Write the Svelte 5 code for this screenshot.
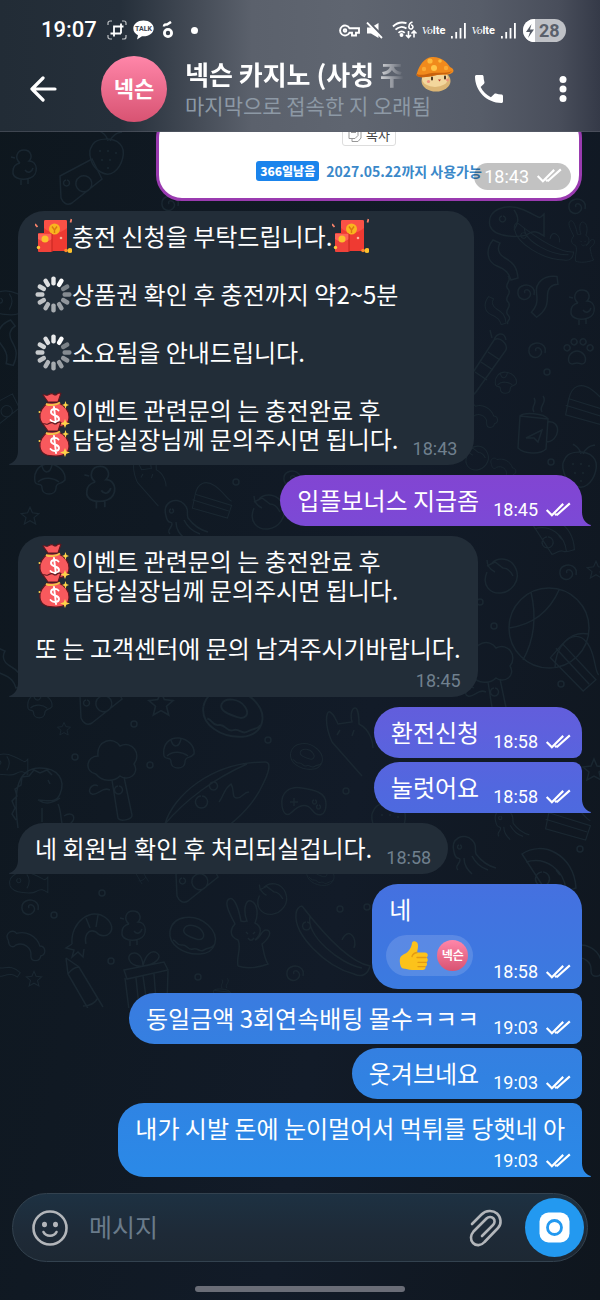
<script lang="ts">
    type Emoji = "envelope" | "spinner" | "bag";

    interface Line {
        text: string;
        before?: Emoji;
        after?: Emoji;
    }

    interface Message {
        out: boolean;
        lines: Line[];
        time: string;
        first?: boolean;
        last?: boolean;
        wrapTime?: boolean;
        reaction?: boolean;
    }

    interface Doodle {
        kind: string;
        x: number;
        y: number;
        s?: number;
        r?: number;
    }

    const contact = "넥슨";
    let draft = $state("");

    const messages: Message[] = [
        {
            out: false,
            first: true,
            last: true,
            time: "18:43",
            lines: [
                { text: "충전 신청을 부탁드립니다.", before: "envelope", after: "envelope" },
                { text: "" },
                { text: "상품권 확인 후 충전까지 약2~5분", before: "spinner" },
                { text: "" },
                { text: "소요됨을 안내드립니다.", before: "spinner" },
                { text: "" },
                { text: "이벤트 관련문의 는 충전완료 후", before: "bag" },
                { text: "담당실장님께 문의주시면 됩니다.", before: "bag" },
            ],
        },
        { out: true, first: true, last: true, time: "18:45", lines: [{ text: "입플보너스 지급좀" }] },
        {
            out: false,
            first: true,
            last: true,
            wrapTime: true,
            time: "18:45",
            lines: [
                { text: "이벤트 관련문의 는 충전완료 후", before: "bag" },
                { text: "담당실장님께 문의주시면 됩니다.", before: "bag" },
                { text: "" },
                { text: "또 는 고객센터에 문의 남겨주시기바랍니다." },
            ],
        },
        { out: true, first: true, time: "18:58", lines: [{ text: "환전신청" }] },
        { out: true, last: true, time: "18:58", lines: [{ text: "눌럿어요" }] },
        { out: false, first: true, last: true, time: "18:58", lines: [{ text: "네 회원님 확인 후 처리되실겁니다." }] },
        { out: true, first: true, reaction: true, time: "18:58", lines: [{ text: "네" }] },
        { out: true, time: "19:03", lines: [{ text: "동일금액 3회연속배팅 몰수ㅋㅋㅋ" }] },
        { out: true, time: "19:03", lines: [{ text: "웃겨브네요" }] },
        { out: true, last: true, wrapTime: true, time: "19:03", lines: [{ text: "내가 시발 돈에 눈이멀어서 먹튀를 당햇네 아" }] },
    ];

    const shapes: Record<string, string> = {
        dot: "M-3 0a3 3 0 1 0 6 0a3 3 0 1 0-6 0",
        spiral: "M1 1c-2-3 3-5 5-1s-3 9-8 7s-6-10 0-13s14 1 12 9",
        star: "M0-11l3 7 8 1-6 5 2 8-7-4-7 4 2-8-6-5 8-1z",
        paw: "M-8 10c-2-6 3-11 8-11s10 5 8 11c-2 4-5 1-8 1s-6 3-8-1M-12-2a3 3 0 1 0 1-5a3 3 0 0 0-1 5M-5-8a3 3 0 1 0 1-5a3 3 0 0 0-1 5M4-8a3 3 0 1 0 1-5a3 3 0 0 0-1 5M11-2a3 3 0 1 0 1-5a3 3 0 0 0-1 5",
        duck: "M-4-5c-6-5-3-13 4-13s9 7 5 11c9 0 10 14 1 17s-18 0-17-7c0-4 3-7 7-8M-9-10l-4-1M-3 11v6M4 11v5M1 2c3 4 7 2 8-2",
        donut: "M-22-4c3-16 25-18 38-6s8 28-8 29s-32-9-30-23M-8-6c3-6 14-4 18 2s0 10-6 8s-14-5-12-10M-19 5c4 1 4 6 9 5s6 6 11 4 6 4 11 1 7-1 10-5",
        rabbit: "M-14 32c-2-10 4-18 0-26c-10-4-7-12-3-16c-4-8-12-22-6-25s10 12 12 22c2 1 5 0 6 0c-4-10-2-22 4-20s8 12 4 22c8 4 6 12 0 17c6-2 6-10 11-10s6 6-4 14c2 8 2 14 6 20c-10 4-22 5-30 2M-6-2l2 2M3-2l-2 2M-4 4c2 3 4 3 6 0",
        gift: "M-21-8l40-8 4 8-41 9zM-20 0l4 32 38-6 1-33M-9 0l3 29M-2-2l4 28M9-4l2 26M-2-12c-16 2-18-14-8-13c6 1 8 8 8 13c2-10 8-17 14-13s-2 12-14 13",
        pencil: "M-20-30l2 16 22 38M-20-30l13 9 24 40M-18-14c3-4 7-7 11-7M-3 18c6 0 12-3 15-8",
        bone: "M-24-6c-5-8 5-14 9-8c10-3 22 2 26 14c6 0 8 9 1 11c-1 7-11 7-11 0c1-9-8-16-17-12c-3 4-8 1-8-5",
        shrimp: "M-20 14c-2-22 20-38 34-26s-1 24-10 14c-8-4-12 4-10 12M-6-12l4 10M6-15l-2 12M-20 14l-6 4 8 2-2 7 6-5 5 5 1-8",
        dino: "M-28 38c-4-30-4-60 22-60c18 0 26 12 20 26c-4 10-14 6-22 6M12 14c4 8 2 18 6 26M-30 30l-4-6 3-6-3-7 5-5-2-7 6-4 1-8 7-1 5-6 6 3 7-3 5 5M2-10l2 4M-8 10c6 4 14 4 22-2M-4 18v14M18 26c8-6 14 2 6 8",
        tree: "M-20 8c-12-2-10-18 2-18c-2-16 16-20 22-10c12-6 22 8 14 18c6 10-6 18-14 12c-6 6-18 6-24-2M-4 14l6 38c2 4 14 2 14-3l-8-38M-6 24c-8-4-12 6-18 4s0-12 6-8M2 20a4 4 0 1 0 1 0",
        mushroom: "M-15 4c-2-12 6-19 15-18s16 8 15 16c-4 5-9 2-9 8c0 8-14 8-14 0c0-6-5-1-7-6M-8-12c2 8 8 8 10-1M-12 4c6-6 16-4 21 0",
        rocket: "M-50 34c8-28 46-62 100-62c8 0 2 14-2 22c-10 22-30 42-60 58M-50 34c20-24 50-46 82-60M-2-8a4 4 0 1 0 1 0M-14 6a6 6 0 1 0 1 0M4 12c6-8 4-12 12-18c4 6 0 14 6 14s6-6 12-6",
        ball: "M-40 0a40 40 0 1 0 80 0a40 40 0 1 0-80 0M-18-36c6 26 2 50-8 68M-40 0c28-4 42-20 50-38M40 6c-20-4-34 14-34 34",
        peach: "M-14-4c-6 14 4 22 14 21s20-12 15-24s-18-12-24-6M-14-10l8-4 8 6c4 0 8 4 10 8M-6-4c-6-3-8-7-8-12",
        mug: "M-14-16l28 3-2 30c-6 6-22 5-28-1zM14-10c14-2 12 20-2 20M-14-16c4-4 24-3 28 3M-8 6l16-8-4 12-4-4zM0-20c-4-6 4-8 0-14M8-20c-4-6 6-9 1-16",
        candle: "M-22 36c-4-4-2-10 4-20l22-34c6-4 14 4 12 10l-30 42c-3 4-6 4-8 2M-15 14l12 8M-9 4l12 8M-2-6l12 8M4-18c2-6 10-10 12 0M2-20l-2-8",
        ribbon: "M-12-22c-8 10-6 22 4 26s12 8 14 14l7-2c-1-12-6-16-13-20s-8-10-5-15z",
        squiggle: "M0-24c5 5-5 8 0 13s-5 8 0 13 -5 8 0 13 -3 6 0 9",
        straw: "M-15-10c4-6 20-7 27 0s2 22-6 28s-20-2-23-12s0-12 2-16M0-13c-2-8-6-8-8-10M2-13c4-8 8-8 12-9M-8-4v2M0-4v2M8-2v2M-6 5v2M2 5v2M0 13v2",
        bear: "M-18 12c-8-18-6-32-2-30s6 8 8 12l14-2c-2-8 0-14 3-14s4 10 4 16c12 6 14 20 14 24M-10 0l-3 5M4 0l-2 6M-18 12l30 34",
        jelly: "M-14 0c-4-14 10-20 18-12c6 6 2 8 4 14c6 8 12 12 20 14M-14 0c2 10 6 4 6 8s-6 6-2 10M-4 6c0 8 4 12 8 16M4 4c4 8 10 12 16 14M-9-7a2 2 0 1 0 1 0",
        pizza: "M-26-22c20-14 52 0 54 34c-6 2-10 4-14 2c-6-2-10 4-14 4zM-22-14c20-6 38 8 40 28M-6-4a7 7 0 1 0 1 0M8-6l4 5",
        boat: "M-34-34c20 26 46 56 68 60c-2 8-8 12-16 8c-30-8-60-40-58-60c0-4 3-8 6-8M-26-24c-4 20 30 48 52 52M6 0c6-14 16-2 12 8M-30-18a4 4 0 1 0 1 0",
        fish: "M-20 8c-4-16 16-24 34-16s14 10 20 4v22c-6-4-10-6-16-2s-34 4-38-8M-8-2a3 3 0 1 0 1 0M4-8c6 8 4 14 0 20",
        camera: "M-20-6l32-17 10 20-30 24c-5 3-9 0-11-5zM-4 0a8 8 0 1 0 10-6a8 8 0 0 0-10 6M-14-2a3 3 0 1 0 1 0",
        cake: "M-24 6c4-18 16-20 28-12s18 20 24 22M-24 6l52 16-6 18-50-14zM-28 14l52 16",
        pad: "M-22 6c-2-14 8-20 20-18s24 4 24 16s-8 14-14 6-14-4-20 2-9 0-10-6M-10-2v8M-14 2h8M10 0a2 2 0 1 0 1 0M14 5a2 2 0 1 0 1 0",
    };

    const doodles: Doodle[] = [
        { kind: "duck", x: 24, y: 168 }, { kind: "spiral", x: 168, y: 203 }, { kind: "camera", x: 80, y: 182 },
        { kind: "spiral", x: 575, y: 206 }, { kind: "fish", x: 510, y: 218 }, { kind: "straw", x: 108, y: 154 },
        { kind: "boat", x: 546, y: 240, r: -14, s: 0.7 }, { kind: "rabbit", x: 584, y: 242, s: 0.6 },
        { kind: "ribbon", x: 505, y: 262 }, { kind: "squiggle", x: 508, y: 300 }, { kind: "spiral", x: 524, y: 292 },
        { kind: "ribbon", x: 544, y: 298, r: 60 }, { kind: "duck", x: 582, y: 308 }, { kind: "ribbon", x: 497, y: 312, s: 0.7 },
        { kind: "candle", x: 490, y: 358 }, { kind: "spiral", x: 535, y: 350 }, { kind: "paw", x: 577, y: 352 },
        { kind: "mushroom", x: 506, y: 382, s: 0.7 }, { kind: "dot", x: 547, y: 372 }, { kind: "cake", x: 588, y: 394, s: 0.8 },
        { kind: "bone", x: 486, y: 416, s: 0.7 }, { kind: "mug", x: 534, y: 432 }, { kind: "straw", x: 581, y: 467 },
        { kind: "peach", x: 477, y: 458, s: 0.7 }, { kind: "bone", x: 506, y: 468, s: 0.6 }, { kind: "dot", x: 551, y: 462 },
        { kind: "fish", x: 6, y: 300, s: 0.8 }, { kind: "ribbon", x: 10, y: 345, r: 30 }, { kind: "camera", x: 4, y: 410, s: 0.7 },
        { kind: "mushroom", x: 50, y: 478 }, { kind: "duck", x: 100, y: 488, s: 1.2 }, { kind: "bear", x: 150, y: 474, s: 0.7 },
        { kind: "cake", x: 212, y: 490, s: 0.7 }, { kind: "spiral", x: 290, y: 478 }, { kind: "peach", x: 268, y: 512 },
        { kind: "star", x: 30, y: 516, s: 0.8 }, { kind: "jelly", x: 180, y: 516 }, { kind: "dot", x: 236, y: 482 },
        { kind: "camera", x: 545, y: 500, s: 0.8 }, { kind: "pizza", x: 552, y: 540, s: 0.8 }, { kind: "star", x: 596, y: 570, s: 0.8 },
        { kind: "peach", x: 501, y: 576 }, { kind: "spiral", x: 566, y: 572 }, { kind: "ball", x: 549, y: 628 },
        { kind: "dot", x: 480, y: 602 }, { kind: "dot", x: 494, y: 626 }, { kind: "tree", x: 492, y: 668 },
        { kind: "cake", x: 584, y: 650, s: 0.9, r: 30 }, { kind: "ribbon", x: 10, y: 670 }, { kind: "dot", x: 561, y: 684 },
        { kind: "mushroom", x: 40, y: 705, s: 0.8 }, { kind: "camera", x: 100, y: 702 }, { kind: "star", x: 161, y: 704, s: 1.1 },
        { kind: "donut", x: 232, y: 712, s: 1.3 }, { kind: "star", x: 64, y: 729, s: 0.6 }, { kind: "dot", x: 134, y: 724 },
        { kind: "fish", x: 4, y: 762, s: 0.7 }, { kind: "dino", x: 46, y: 790 }, { kind: "tree", x: 116, y: 766 },
        { kind: "mushroom", x: 179, y: 752 }, { kind: "dot", x: 75, y: 757 }, { kind: "dot", x: 150, y: 765 },
        { kind: "rocket", x: 215, y: 790 }, { kind: "dot", x: 268, y: 740 }, { kind: "bear", x: 350, y: 730 },
        { kind: "pad", x: 304, y: 800 }, { kind: "donut", x: 306, y: 756, s: 0.7 }, { kind: "dot", x: 346, y: 791 },
        { kind: "straw", x: 390, y: 818 }, { kind: "star", x: 594, y: 770 }, { kind: "jelly", x: 507, y: 822, s: 0.8 },
        { kind: "cake", x: 568, y: 808, s: 0.8 }, { kind: "jelly", x: 468, y: 852 }, { kind: "dot", x: 580, y: 849 },
        { kind: "pizza", x: 548, y: 876 }, { kind: "donut", x: 320, y: 874, s: 0.6 }, { kind: "fish", x: 24, y: 880, s: 0.7 },
        { kind: "pencil", x: 140, y: 872, s: 0.5 }, { kind: "camera", x: 196, y: 880 }, { kind: "spiral", x: 28, y: 907 },
        { kind: "dot", x: 102, y: 893 }, { kind: "dot", x: 54, y: 915 }, { kind: "shrimp", x: 92, y: 930 },
        { kind: "duck", x: 133, y: 929 }, { kind: "donut", x: 192, y: 935 }, { kind: "rabbit", x: 252, y: 934 },
        { kind: "peach", x: 272, y: 899, s: 0.9 }, { kind: "bone", x: 30, y: 946, s: 0.9 }, { kind: "boat", x: 336, y: 940 },
        { kind: "star", x: 34, y: 979, s: 0.7 }, { kind: "dot", x: 111, y: 961 }, { kind: "pencil", x: 86, y: 988 },
        { kind: "gift", x: 145, y: 978 }, { kind: "dot", x: 198, y: 977 }, { kind: "spiral", x: 293, y: 973 },
        { kind: "dot", x: 340, y: 909 }, { kind: "dot", x: 367, y: 907 }, { kind: "mug", x: 222, y: 1000, s: 0.6 },
        { kind: "bone", x: 590, y: 960 }, { kind: "ribbon", x: 6, y: 970, r: -40, s: 0.7 },
    ];
</script>

{#snippet ticks()}
    <svg class="ticks" viewBox="0 0 28 18" aria-hidden="true">
        <path d="M1.500 8.500L7 14L19 2M12 14L26 1.500M10.500 12.500L12 14" />
    </svg>
{/snippet}

{#snippet emoji(kind: Emoji)}
    {#if kind === "spinner"}
        <svg class="emoji" viewBox="0 0 37 37" aria-hidden="true">
            {#each Array(12) as _, i}
                <rect
                    x="16.300" y="0.500" width="4.400" height="9" rx="2"
                    fill="#fff" opacity={i === 1 ? 1 : i === 0 ? 0.9 : 0.4 + (i - 2) * 0.05}
                    transform="rotate({i * 30} 18.500 18.500)"
                />
            {/each}
        </svg>
    {:else if kind === "envelope"}
        <svg class="emoji" viewBox="0 0 37 37" aria-hidden="true">
            <rect x="9" y="2" width="23" height="31" rx="1.500" fill="#ef3a32" />
            <path d="M9 3.500Q9 2 10.500 2h20Q32 2 32 3.500V10Q20 20 9 10z" fill="#fa5146" />
            <circle cx="19.500" cy="11" r="5.500" fill="#f9b51e" />
            <path d="M17 8.500l2.500 3.500 2.500-3.500M19.500 12v3" fill="none" stroke="#d97a12" stroke-width="1.400" />
            <rect x="3" y="15" width="14" height="19" rx="1" fill="#f0423a" />
            <path d="M3 16h14v5Q10 26 3 21z" fill="#ff6256" />
            <circle cx="10" cy="21" r="3.500" fill="#fbc02c" />
            <path d="M17 16v18" stroke="#c5251f" />
            <circle cx="3.500" cy="29.500" r="1.700" fill="#ffc83a" />
            <circle cx="26" cy="20" r="1.300" fill="#ffb49a" />
            <circle cx="31" cy="32.500" r="1.800" fill="#ff8a2a" />
            <circle cx="35" cy="32.500" r="2.500" fill="#fcc22e" />
            <path d="M0 6l2.500 3M36.500 1l-1 3.500" stroke="#f5826a" stroke-width="1.800" />
        </svg>
    {:else}
        <svg class="emoji" viewBox="0 0 37 37" aria-hidden="true">
            <path
                d="M13 11C8 14 4 20 5 26c1 8 8 9 16 9s13-3 13-10c0-6-4-11-10-14z"
                fill="#f8595d" stroke="#5d1820" stroke-width="1.200"
            />
            <path d="M8 3c2-1 3 1 5 0s3-2 5-1 2 2 4 0 3 0 4-1l-3 9H13z" fill="#f8595d" stroke="#5d1820" stroke-width="1.200" />
            <path d="M11 12c4 2 10 1 14-1.500" fill="none" stroke="#f6c04a" stroke-width="2" />
            <path
                d="M23.500 18.500c-2-2.500-7.500-2-7.500 1.500 0 4.500 8 2.500 8 7 0 3.500-6 4-8.500 1M19 15l2 17"
                fill="none" stroke="#fff" stroke-width="1.900" stroke-linecap="round"
            />
            <path d="M30.500 9l1 3 2.500 1-2.500 1-1 3-1-3-2.500-1 2.500-1zM30 27l1.300 3.200 3.700 1.300-3.700 1.300L30 36l-1.300-3.200-3.700-1.300 3.700-1.300z" fill="#fdd34a" />
            <circle cx="4.500" cy="20" r="1" fill="#fdd34a" />
        </svg>
    {/if}
{/snippet}

{#snippet signal()}
    <svg width="16" height="17" viewBox="0 0 16 17" fill="#fff" aria-hidden="true">
        <rect x="0" y="14" width="1.800" height="2.500" />
        <rect x="4.300" y="10" width="1.800" height="6.500" />
        <rect x="8.600" y="6" width="1.800" height="10.500" />
        <rect x="13" y="1" width="1.800" height="15.500" />
    </svg>
{/snippet}

<div class="screen">
    <svg class="wallpaper" width="600" height="1008" aria-hidden="true">
        {#each doodles as d}
            <path d={shapes[d.kind]} transform="translate({d.x} {d.y}) rotate({d.r ?? 0}) scale({d.s ?? 1})" />
        {/each}
    </svg>

    <header>
        <div class="status">
            <span class="clock">19:07</span>
            <svg width="20" height="20" viewBox="0 0 20 20" fill="none" stroke="#fff" aria-hidden="true">
                <path d="M1 5V3a2 2 0 0 1 2-2h2M15 1h2a2 2 0 0 1 2 2v2M19 15v2a2 2 0 0 1-2 2h-2M5 19H3a2 2 0 0 1-2-2v-2" stroke-width="1.200" opacity="0.700" />
                <path d="M7 13.500V6.500h9.500M3.500 13.500H14M14 3.500v10M7 13.500v3" stroke-width="1.800" />
            </svg>
            <svg width="21" height="20" viewBox="0 0 21 20" aria-hidden="true">
                <path d="M10.500 0.500C4.800 0.500 0.300 4 0.300 8.500c0 3 2 5.500 4.700 6.800L4 19.500l5-3.200c6.500.6 11.700-3 11.700-7.800 0-4.500-4.500-8-10.200-8z" fill="#fff" />
                <text x="10.500" y="11.200" class="talk">TALK</text>
            </svg>
            <svg class="sprout" width="12" height="18" viewBox="0 0 12 18" aria-hidden="true">
                <circle cx="6" cy="12" r="3.600" fill="none" stroke="#fff" stroke-width="2.800" />
                <path d="M2 5.500C2 3 4 3.500 5 3.500L9 1" fill="none" stroke="#fff" stroke-width="2.600" />
            </svg>
            <span class="dot"></span>
            <span class="spacer"></span>
            <svg width="21" height="13" viewBox="0 0 21 13" fill="none" stroke="#fff" stroke-width="1.900" aria-hidden="true">
                <path d="M10.500 4.200A5 5 0 1 0 10.500 8.800H13V11.500H17V8.800H20V4.200z" />
                <circle cx="6" cy="6.500" r="1.300" />
            </svg>
            <svg class="mute" width="18" height="17" viewBox="0 0 18 17" aria-hidden="true">
                <path d="M1 5.500h4L12.500 1v15L5 11.500H1z" fill="#fff" />
                <path d="M2.500 0l15 15" stroke="#5b616c" stroke-width="2.500" />
                <path d="M1 0.500l15 15.500" stroke="#fff" stroke-width="1.800" />
            </svg>
            <svg width="26" height="18" viewBox="0 0 26 18" fill="none" stroke="#fff" stroke-width="1.900" aria-hidden="true">
                <path d="M1 5.500C5 1.500 10 .8 14.500 2.200M3.500 8.700c3-3 7.500-3.500 11-1.200M6.500 11.800c1.700-1.700 4.500-1.700 6.200 0" />
                <circle cx="9.500" cy="14" r="1" fill="#fff" />
                <path d="M20.500 1C17.500 2 17 4 17 5.500a2 2 0 1 0 2-1.500" stroke-width="1.600" />
                <path d="M16.500 10v6M14 14l2.500 2.500L19 14M22 16.500V10M19.500 12.500L22 10l2.500 2.500" stroke-width="1.600" />
            </svg>
            <span class="volte"><i>Vo</i>lte</span>
            {@render signal()}
            <span class="volte"><i>Vo</i>lte</span>
            {@render signal()}
            <span class="battery">
                <svg width="12" height="23" viewBox="0 0 12 23" aria-hidden="true">
                    <path d="M8.500 5L3 13h4l-2 6 6-8.500H7z" fill="#565c67" />
                </svg>
                28
            </span>
        </div>

        <div class="bar">
            <button class="back" aria-label="뒤로">
                <svg width="28" height="26" viewBox="0 0 28 26" fill="none" stroke="#fff" stroke-width="3.200" stroke-linecap="round" stroke-linejoin="round">
                    <path d="M14 2L3 13l11 11M3 13h23" />
                </svg>
            </button>
            <div class="avatar">{contact}</div>
            <div class="who">
                <div class="title">
                    <h1>{contact} 카지노 (사칭 주</h1>
                    <svg width="38" height="36" viewBox="0 0 38 36" aria-hidden="true">
                        <ellipse cx="20" cy="25" rx="14.500" ry="10.500" fill="#dcb574" />
                        <ellipse cx="19" cy="22.500" rx="13" ry="8.500" fill="#f3d69c" />
                        <path d="M1 17C3 10 8 1.500 16 1c9-.5 15 5 18 10 3 1 5 4 2 6-5 3-10 1-15 2S8 22 4 21s-4-2-3-4z" fill="#f18a1c" />
                        <path d="M1 18c4 2 9 0 15-1s14 1 20-2c-3 4-9 3-15 4S8 22 4 21s-3-2-3-3z" fill="#c9620e" />
                        <circle cx="14" cy="5" r="2.600" fill="#ffb93a" />
                        <circle cx="24" cy="5" r="1.800" fill="#ffb93a" />
                        <circle cx="18" cy="12" r="3" fill="#ffc548" />
                        <circle cx="8" cy="13" r="2.200" fill="#fba934" />
                        <circle cx="30" cy="12" r="2.200" fill="#fba934" />
                        <path d="M16 21.500v2M29 20.500v2" stroke="#3a2413" stroke-width="1.800" stroke-linecap="round" />
                        <path d="M22 23.500h3l-1.500 2z" fill="#b8352c" />
                        <circle cx="12.500" cy="25.500" r="1.600" fill="#f0907c" />
                        <circle cx="31.500" cy="24" r="1.400" fill="#f0907c" />
                    </svg>
                </div>
                <p>마지막으로 접속한 지 오래됨</p>
            </div>
            <button class="call" aria-label="통화">
                <svg width="28" height="28" viewBox="3 3 18 18" fill="#fff">
                    <path d="M6.620 10.790c1.440 2.830 3.760 5.150 6.590 6.590l2.200-2.200c.27-.27.670-.36 1.020-.24 1.120.37 2.330.57 3.570.57.550 0 1 .45 1 1V20c0 .550-.45 1-1 1C10.610 21 3 13.390 3 4c0-.55.45-1 1-1h3.500c.550 0 1 .45 1 1 0 1.250.2 2.450.57 3.570.11.350.030.740-.25 1.020l-2.200 2.200z" />
                </svg>
            </button>
            <button class="more" aria-label="메뉴">
                <svg width="8" height="28" viewBox="0 0 8 28" fill="#fff">
                    <circle cx="4" cy="4.500" r="3.500" />
                    <circle cx="4" cy="14" r="3.500" />
                    <circle cx="4" cy="23.500" r="3.500" />
                </svg>
            </button>
        </div>
    </header>

    <main>
        <div class="photo">
            <span class="copy">
                <svg width="14" height="16" viewBox="0 0 14 16" fill="#fff" stroke="#999" aria-hidden="true">
                    <path d="M4 3h9v9l-3 3.500H4z" />
                    <path d="M1 .5h9v9l-3 3H1z" />
                    <path d="M3 4h5M3 6.500h5" />
                </svg>
                복사
            </span>
            <div class="voucher">
                <strong>366일남음</strong>
                <span>2027.05.22까지 사용가능</span>
            </div>
            <span class="stamp">18:43 {@render ticks()}</span>
        </div>

        {#each messages as m}
            <div class="bubble" class:out={m.out} class:first={m.first} class:last={m.last}>
                {#each m.lines as line, i}
                    <div class="line">
                        {#if line.before}{@render emoji(line.before)}{/if}
                        <span>{line.text}</span>
                        {#if line.after}{@render emoji(line.after)}{/if}
                        {#if i === m.lines.length - 1 && !m.wrapTime && !m.reaction}
                            <span class="meta">{m.time}{#if m.out}{@render ticks()}{/if}</span>
                        {/if}
                    </div>
                {/each}
                {#if m.reaction}
                    <div class="reactions">
                        <button class="reaction" aria-label="좋아요">
                            <svg width="30" height="31" viewBox="0 0 30 31" aria-hidden="true">
                                <path
                                    d="M1.500 17C4 14 7 14 9 11.500c2.500-3 3.500-5 4-8.500.4-2.500 5-2.500 5.800 1 .7 3-.3 6-.8 8.500h8c3.500 0 3.500 4.500 1.200 5 2.300.8 2 4.300-.2 4.800 1.700 1 1.200 4-.9 4.300 1 1.400-.1 3.400-2.100 3.400H13c-3.500 0-6-1.500-9-1.500-3 0-4-9-2.500-11.500z"
                                    fill="#fcc21b"
                                />
                                <path d="M18 17.500h9M19 22.300h8M19 26.600h7M18 12.500c-3 .5-4.500 2-5 4" fill="none" stroke="#e39a12" stroke-width="1.300" stroke-linecap="round" />
                            </svg>
                            <span class="avatar small">{contact}</span>
                        </button>
                        <span class="meta">{m.time}{@render ticks()}</span>
                    </div>
                {/if}
                {#if m.wrapTime}
                    <span class="meta below">{m.time}{#if m.out}{@render ticks()}{/if}</span>
                {/if}
            </div>
        {/each}
    </main>

    <footer>
        <div class="composer">
            <button aria-label="이모티콘">
                <svg width="38" height="38" viewBox="0 0 38 38" fill="none" stroke="#b3b6ba" stroke-width="2.600" stroke-linecap="round">
                    <circle cx="19" cy="19" r="16.500" />
                    <path d="M12.500 23c2.500 5 10.500 5 13 0" />
                    <ellipse cx="13.500" cy="15.500" rx="1.200" ry="1.500" fill="#b3b6ba" />
                    <ellipse cx="24.500" cy="15.500" rx="1.200" ry="1.500" fill="#b3b6ba" />
                </svg>
            </button>
            <input type="text" placeholder="메시지" aria-label="메시지" bind:value={draft} />
            <button aria-label="파일 첨부">
                <svg width="34" height="38" viewBox="0 0 34 38" fill="none" stroke="#b3b6ba" stroke-width="2.600" stroke-linecap="round">
                    <path d="M3 15L12.500 5.500C17 1 24 1 28 4.500S33 15 29 19L15.500 33C12 37 7 37 4 34S1.500 26 4.500 22.500L17.500 9.500C20 7 23 8 24.500 9.500S26 14 24 16L13 27" />
                </svg>
            </button>
            <button class="record" aria-label="영상 메시지">
                <svg width="31" height="31" viewBox="0 0 31 31">
                    <rect x="0.500" y="0.500" width="30" height="30" rx="9" fill="#fff" />
                    <circle cx="15.500" cy="15.500" r="7" fill="#fff" stroke="#2399f0" stroke-width="2.800" />
                </svg>
            </button>
        </div>
        <div class="home"></div>
    </footer>
</div>

<style>
    :global(body) {
        background: #111923;
    }

    .screen {
        position: relative;
        min-height: 100vh;
        display: flex;
        flex-direction: column;
        overflow: hidden;
        background: linear-gradient(100deg, #0e171e, #121b28 60%, #0f161e);
        color: #fff;
        font-family: "Noto Sans CJK KR", Roboto, sans-serif;
    }

    button {
        display: flex;
        align-items: center;
        justify-content: center;
        padding: 0;
        border: none;
        background: none;
        color: inherit;
        font: inherit;
        cursor: pointer;
    }

    svg {
        flex: none;
    }

    .wallpaper {
        position: absolute;
        top: 0;
        left: 0;
        fill: none;
        stroke: #1a2731;
        stroke-width: 1.500;
    }

    header {
        position: relative;
        z-index: 1;
        box-sizing: border-box;
        height: 132px;
        background: linear-gradient(90deg, #222c36 0, #252f3a 20%, #454c57 33%, #5b616c 42%, #5f6570 58%, #575d69 80%, #494e5b 93%, #353a48);
        border-bottom: 1px solid #5b606b80;
    }

    .status {
        display: flex;
        align-items: center;
        gap: 6px;
        height: 40px;
        padding: 10px 34px 0 41px;
    }

    .clock {
        margin-right: 4px;
        font: 500 22px/28px Roboto, sans-serif;
    }

    .talk {
        fill: #3f4650;
        font: 700 7px Roboto, sans-serif;
        text-anchor: middle;
    }

    .sprout {
        margin-left: 2px;
    }

    .dot {
        width: 7px;
        height: 7px;
        margin-left: 11px;
        border-radius: 50%;
        background: #fff;
    }

    .spacer {
        flex: 1;
    }

    .mute {
        margin-right: 2px;
    }

    .volte {
        margin-left: -2px;
        font: 700 11px/18px Roboto, sans-serif;
    }

    .volte i {
        font: italic 400 11px/18px "Liberation Serif", serif;
    }

    .battery {
        display: flex;
        align-items: center;
        gap: 4px;
        width: 43px;
        height: 23px;
        border-radius: 12px;
        overflow: hidden;
        background: #bfc1c6;
        color: #5a606b;
        font: 700 18px/23px Roboto, sans-serif;
    }

    .battery svg {
        background: #fff;
    }

    .bar {
        display: flex;
        align-items: center;
        height: 78px;
        padding: 0 33px 0 29px;
    }

    .avatar {
        flex: none;
        width: 66px;
        height: 66px;
        margin-left: 44px;
        border-radius: 50%;
        background: linear-gradient(#ff86a9, #d85372);
        font-size: 22px;
        font-weight: 700;
        line-height: 62px;
        text-align: center;
    }

    .who {
        flex: 1;
        min-width: 0;
        margin-left: 18px;
        padding-bottom: 4px;
    }

    .title {
        display: flex;
        align-items: center;
        gap: 12px;
    }

    h1 {
        margin: 0;
        overflow: hidden;
        font-size: 26px;
        font-weight: 700;
        line-height: 36px;
        white-space: nowrap;
        -webkit-mask-image: linear-gradient(90deg, #000 85%, #0000);
        mask-image: linear-gradient(90deg, #000 85%, #0000);
    }

    .who p {
        margin: 0;
        color: #8d99a5;
        font-size: 21px;
        line-height: 27px;
        white-space: nowrap;
    }

    .more {
        margin-left: 56px;
    }

    main {
        position: relative;
        flex: 1;
        display: flex;
        flex-direction: column;
        align-items: flex-start;
        padding: 0 18px;
        overflow: hidden;
    }

    .photo {
        position: relative;
        align-self: flex-end;
        box-sizing: border-box;
        width: 426px;
        max-width: 100%;
        margin-top: -20px;
        padding: 7px 0 17px;
        display: flex;
        flex-direction: column;
        align-items: center;
        gap: 15px;
        border: 3px solid #9a3bb0;
        border-radius: 26px;
        background: #fff;
    }

    .copy {
        display: flex;
        align-items: center;
        gap: 4px;
        height: 22px;
        padding: 0 5px;
        border: 1px solid #ddd;
        border-radius: 3px;
        color: #444;
        font-size: 13px;
    }

    .voucher {
        display: flex;
        align-items: center;
        gap: 7px;
        color: #3a88c9;
        font-size: 14px;
        font-weight: 700;
        line-height: 20px;
    }

    .voucher strong {
        padding: 0 4px;
        border-radius: 3px;
        background: #1a84ec;
        color: #fff;
        font-size: 12px;
    }

    .stamp {
        position: absolute;
        right: 8px;
        bottom: 8px;
        display: flex;
        align-items: center;
        gap: 7px;
        padding: 0 8px 0 10px;
        border-radius: 14px;
        background: #0000003d;
        font: 18px/27px Roboto, sans-serif;
    }

    .bubble {
        position: relative;
        display: flex;
        flex-direction: column;
        max-width: 100%;
        box-sizing: border-box;
        margin-top: 4px;
        padding: 10px 17px 12px;
        border-radius: 9px 26px 26px 9px;
        background: #222d38;
        font-size: 24px;
        line-height: 29px;
    }

    .bubble.first {
        margin-top: 10px;
        border-top-left-radius: 26px;
    }

    .bubble.last {
        border-bottom-left-radius: 0;
    }

    .bubble.last::after {
        content: "";
        position: absolute;
        bottom: 0;
        left: -9px;
        width: 10px;
        height: 14px;
        background: #222d38;
        clip-path: path("M10 0H9C9 7 5 12 0 13Q0 14 1 14H10z");
    }

    .bubble.out {
        align-self: flex-end;
        border-radius: 26px 9px 9px 26px;
    }

    .bubble.out.first {
        border-top-right-radius: 26px;
    }

    .bubble.out.last {
        border-bottom-right-radius: 0;
    }

    .bubble.out.last::after {
        left: auto;
        right: -9px;
        clip-path: path("M0 0H1C1 7 5 12 10 13Q10 14 9 14H0z");
    }

    /* every sent bubble shows its own slice of one screen-high gradient */
    .bubble.out,
    .bubble.out.last::after {
        background: linear-gradient(#a036a0, #9a3bb0 14%, #8046d4 38%, #5f60dd 56%, #5068df 61%, #4273e0 70%, #387de0 78%, #3182e2 83%, #2a8ae8 91%) fixed;
    }

    .line {
        display: flex;
        align-items: center;
        min-height: 29px;
        white-space: nowrap;
    }

    .emoji {
        width: 37px;
        height: 37px;
        margin: -3px 0 -5px;
    }

    .meta {
        display: flex;
        align-items: center;
        align-self: flex-end;
        gap: 7px;
        margin: 0 0 -8px 14px;
        color: #70808e;
        font: 18px/24px Roboto, sans-serif;
    }

    .out .meta {
        margin-right: -7px;
        color: #fff;
    }

    .meta.below {
        margin-top: 7px;
    }

    .ticks {
        width: 27px;
        height: 17px;
        fill: none;
        stroke: #fff;
        stroke-width: 2.300;
    }

    .reactions {
        display: flex;
        align-items: center;
        gap: 6px;
        margin: 12px 0 1px -3px;
    }

    .reaction {
        gap: 8px;
        height: 41px;
        padding: 0 5px 0 13px;
        border-radius: 21px;
        background: #ffffff24;
    }

    .avatar.small {
        width: 31px;
        height: 31px;
        margin: 0;
        font-size: 12px;
        line-height: 30px;
    }

    footer {
        position: relative;
        padding: 16px 12px 8px;
    }

    .composer {
        display: flex;
        align-items: center;
        box-sizing: border-box;
        height: 69px;
        padding: 0 3px 0 18px;
        border: 1px solid #33424f;
        border-radius: 35px;
        background: linear-gradient(#1d3142, #1e2a37 60%, #1d2833);
    }

    .composer input {
        flex: 1;
        min-width: 0;
        margin-left: 20px;
        padding: 0 0 4px;
        border: none;
        outline: none;
        background: none;
        color: #fff;
        font: 25px/36px "Noto Sans CJK KR", sans-serif;
    }

    .composer input::placeholder {
        color: #6a7b8a;
        opacity: 1;
    }

    .composer .record {
        width: 59px;
        height: 59px;
        margin-left: 22px;
        border-radius: 50%;
        background: #2399f0;
    }

    .home {
        width: 210px;
        height: 6px;
        margin: 24px auto 0;
        border-radius: 3px;
        background: #6a6d77;
    }
</style>
